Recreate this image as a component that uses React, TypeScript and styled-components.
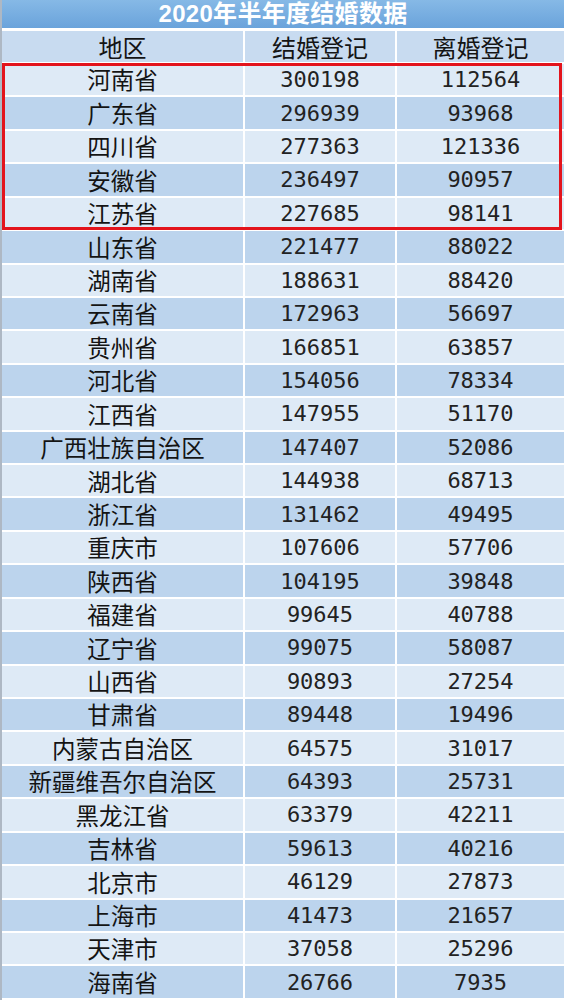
import styled, { createGlobalStyle } from "styled-components";

const GlobalStyle = createGlobalStyle`
  html, body {
    margin: 0;
    padding: 0;
    background: #ffffff;
  }
`;

type Item = { region: string; married: number; divorced: number };

const DATA: Item[] = [
  { region: "河南省", married: 300198, divorced: 112564 },
  { region: "广东省", married: 296939, divorced: 93968 },
  { region: "四川省", married: 277363, divorced: 121336 },
  { region: "安徽省", married: 236497, divorced: 90957 },
  { region: "江苏省", married: 227685, divorced: 98141 },
  { region: "山东省", married: 221477, divorced: 88022 },
  { region: "湖南省", married: 188631, divorced: 88420 },
  { region: "云南省", married: 172963, divorced: 56697 },
  { region: "贵州省", married: 166851, divorced: 63857 },
  { region: "河北省", married: 154056, divorced: 78334 },
  { region: "江西省", married: 147955, divorced: 51170 },
  { region: "广西壮族自治区", married: 147407, divorced: 52086 },
  { region: "湖北省", married: 144938, divorced: 68713 },
  { region: "浙江省", married: 131462, divorced: 49495 },
  { region: "重庆市", married: 107606, divorced: 57706 },
  { region: "陕西省", married: 104195, divorced: 39848 },
  { region: "福建省", married: 99645, divorced: 40788 },
  { region: "辽宁省", married: 99075, divorced: 58087 },
  { region: "山西省", married: 90893, divorced: 27254 },
  { region: "甘肃省", married: 89448, divorced: 19496 },
  { region: "内蒙古自治区", married: 64575, divorced: 31017 },
  { region: "新疆维吾尔自治区", married: 64393, divorced: 25731 },
  { region: "黑龙江省", married: 63379, divorced: 42211 },
  { region: "吉林省", married: 59613, divorced: 40216 },
  { region: "北京市", married: 46129, divorced: 27873 },
  { region: "上海市", married: 41473, divorced: 21657 },
  { region: "天津市", married: 37058, divorced: 25296 },
  { region: "海南省", married: 26766, divorced: 7935 },
];

const Sheet = styled.div`
  width: 564px;
  height: 1000px;
  overflow: hidden;
  box-sizing: border-box;
  border-left: 2px solid #aeb8c4;
  display: flex;
  flex-direction: column;
  gap: 2px;
  background: #ffffff;
`;

const TitleBar = styled.div`
  height: 28px;
  margin-bottom: 1px;
  background: linear-gradient(#86b9e6, #6aa3db);
  color: #ffffff;
  font-family: "Liberation Sans", "Noto Sans CJK SC", sans-serif;
  font-weight: 700;
  font-size: 24px;
  line-height: 28px;
  text-align: center;
  letter-spacing: 0.3px;
`;

const Row = styled.div<{ $height: number }>`
  display: grid;
  grid-template-columns: 241px 150px 1fr;
  column-gap: 2px;
  height: ${(p) => p.$height}px;
  flex-shrink: 0;
`;

const Cell = styled.div<{ $tone: "head" | "light" | "mid"; $mono?: boolean }>`
  display: flex;
  align-items: center;
  justify-content: center;
  background: ${(p) =>
    p.$tone === "head" ? "#c8dbf0" : p.$tone === "light" ? "#deeaf6" : "#bcd4ed"};
  color: ${(p) => (p.$mono ? "#222222" : "#141414")};
  font-family: ${(p) =>
    p.$mono
      ? '"DejaVu Sans Mono", "Liberation Mono", monospace'
      : '"Noto Sans CJK SC", "Liberation Sans", sans-serif'};
  font-size: ${(p) => (p.$tone === "head" ? 24 : p.$mono ? 22 : 23.5)}px;
  line-height: 1;
  white-space: nowrap;
  padding-top: 1px;
`;

const Highlight = styled.div`
  position: relative;
  display: flex;
  flex-direction: column;
  gap: 2px;

  &::after {
    content: "";
    position: absolute;
    top: -1px;
    bottom: -1px;
    left: 0;
    right: 2px;
    border: 3px solid #e3141c;
    pointer-events: none;
  }
`;

const ROW_H = 31.43;

function DataRow({ item, index }: { item: Item; index: number }) {
  const tone = index % 2 === 0 ? "light" : "mid";
  return (
    <Row $height={ROW_H}>
      <Cell $tone={tone}>{item.region}</Cell>
      <Cell $tone={tone} $mono>
        {item.married}
      </Cell>
      <Cell $tone={tone} $mono>
        {item.divorced}
      </Cell>
    </Row>
  );
}

export default function App() {
  return (
    <>
      <GlobalStyle />
      <Sheet>
        <TitleBar>2020年半年度结婚数据</TitleBar>
        <Row $height={31}>
          <Cell $tone="head">地区</Cell>
          <Cell $tone="head">结婚登记</Cell>
          <Cell $tone="head">离婚登记</Cell>
        </Row>
        <Highlight>
          {DATA.slice(0, 5).map((item, i) => (
            <DataRow key={item.region} item={item} index={i} />
          ))}
        </Highlight>
        {DATA.slice(5).map((item, i) => (
          <DataRow key={item.region} item={item} index={i + 5} />
        ))}
      </Sheet>
    </>
  );
}
